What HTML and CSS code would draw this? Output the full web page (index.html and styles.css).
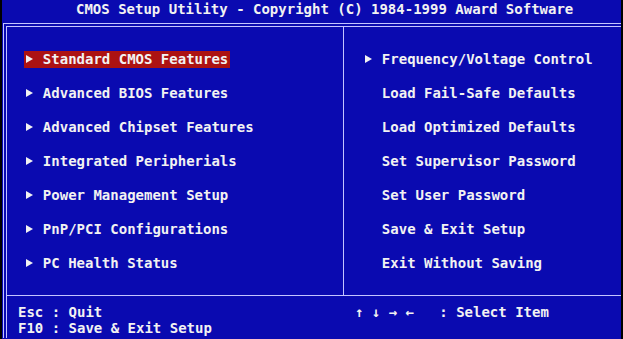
FILE: index.html
```html
<!DOCTYPE html>
<html lang="en">
<head>
    <meta charset="UTF-8">
    <title>CMOS Setup Utility</title>
    <link rel="stylesheet" href="styles.css">
</head>
<body>
    <div class="screen">
        <div class="title">CMOS Setup Utility - Copyright (C) 1984-1999 Award Software</div>

        <div class="frame">
            <div class="menu">
                <ul class="col col-left">
                    <li><span class="item active"><span class="arrow"><svg viewBox="0 0 7 8" width="7" height="8"><path d="M0 0 L7 4 L0 8 Z"/></svg></span>Standard CMOS Features</span></li>
                    <li><span class="item"><span class="arrow"><svg viewBox="0 0 7 8" width="7" height="8"><path d="M0 0 L7 4 L0 8 Z"/></svg></span>Advanced BIOS Features</span></li>
                    <li><span class="item"><span class="arrow"><svg viewBox="0 0 7 8" width="7" height="8"><path d="M0 0 L7 4 L0 8 Z"/></svg></span>Advanced Chipset Features</span></li>
                    <li><span class="item"><span class="arrow"><svg viewBox="0 0 7 8" width="7" height="8"><path d="M0 0 L7 4 L0 8 Z"/></svg></span>Integrated Peripherials</span></li>
                    <li><span class="item"><span class="arrow"><svg viewBox="0 0 7 8" width="7" height="8"><path d="M0 0 L7 4 L0 8 Z"/></svg></span>Power Management Setup</span></li>
                    <li><span class="item"><span class="arrow"><svg viewBox="0 0 7 8" width="7" height="8"><path d="M0 0 L7 4 L0 8 Z"/></svg></span>PnP/PCI Configurations</span></li>
                    <li><span class="item"><span class="arrow"><svg viewBox="0 0 7 8" width="7" height="8"><path d="M0 0 L7 4 L0 8 Z"/></svg></span>PC Health Status</span></li>
                </ul>
                <ul class="col col-right">
                    <li><span class="item"><span class="arrow"><svg viewBox="0 0 7 8" width="7" height="8"><path d="M0 0 L7 4 L0 8 Z"/></svg></span>Frequency/Voltage Control</span></li>
                    <li><span class="item"><span class="arrow"></span>Load Fail-Safe Defaults</span></li>
                    <li><span class="item"><span class="arrow"></span>Load Optimized Defaults</span></li>
                    <li><span class="item"><span class="arrow"></span>Set Supervisor Password</span></li>
                    <li><span class="item"><span class="arrow"></span>Set User Password</span></li>
                    <li><span class="item"><span class="arrow"></span>Save &amp; Exit Setup</span></li>
                    <li><span class="item"><span class="arrow"></span>Exit Without Saving</span></li>
                </ul>
            </div>

            <div class="help">
                <div class="help-left">Esc : Quit
F10 : Save &amp; Exit Setup</div>
                <div class="help-right">↑ ↓ → ←   : Select Item</div>
            </div>
        </div>
    </div>
</body>
</html>
```

FILE: styles.css
```css
body {
    margin: 0;
    background-color: #000;
    font-family: "DejaVu Sans Mono", "Liberation Mono", monospace;
    font-size: 14px;
    font-weight: bold;
    color: #f2f2f2;
}
.screen {
    margin-left: 2px;
    width: 619px;
    height: 339px;
    background-color: #0a0ab0;
    overflow: hidden;
}
.title {
    height: 23px;
    line-height: 18px;
    padding-left: 74px;
    white-space: pre;
}
.frame {
    margin-left: 1px;
    border-left: 4px double #c4c4ff;
    border-top: 4px double #c4c4ff;
}
.menu {
    display: grid;
    grid-template-columns: 337px 1fr;
    height: 268px;
}
.col {
    list-style: none;
    margin: 0;
    padding: 15px 0;
}
.col-left {
    padding-left: 17px;
    border-right: 1px solid #c4c4ff;
}
.col-right {
    padding-left: 19px;
}
.col li {
    height: 34px;
    display: flex;
    align-items: center;
}
.item {
    display: flex;
    align-items: center;
    padding: 0 2px;
    height: 17px;
    line-height: 17px;
    white-space: pre;
}
.item.active {
    background-color: #ac1212;
}
.arrow {
    display: flex;
    align-items: center;
    width: 2ch;
    height: 17px;
}
.arrow svg {
    display: block;
    fill: #f2f2f2;
}
.help {
    display: grid;
    grid-template-columns: 337px 1fr;
    border-top: 1px solid #c4c4ff;
    height: 43px;
    padding-top: 8px;
    box-sizing: border-box;
    line-height: 16px;
    white-space: pre;
}
.help-left {
    padding-left: 11px;
}
.help-right {
    padding-left: 11px;
}
```
